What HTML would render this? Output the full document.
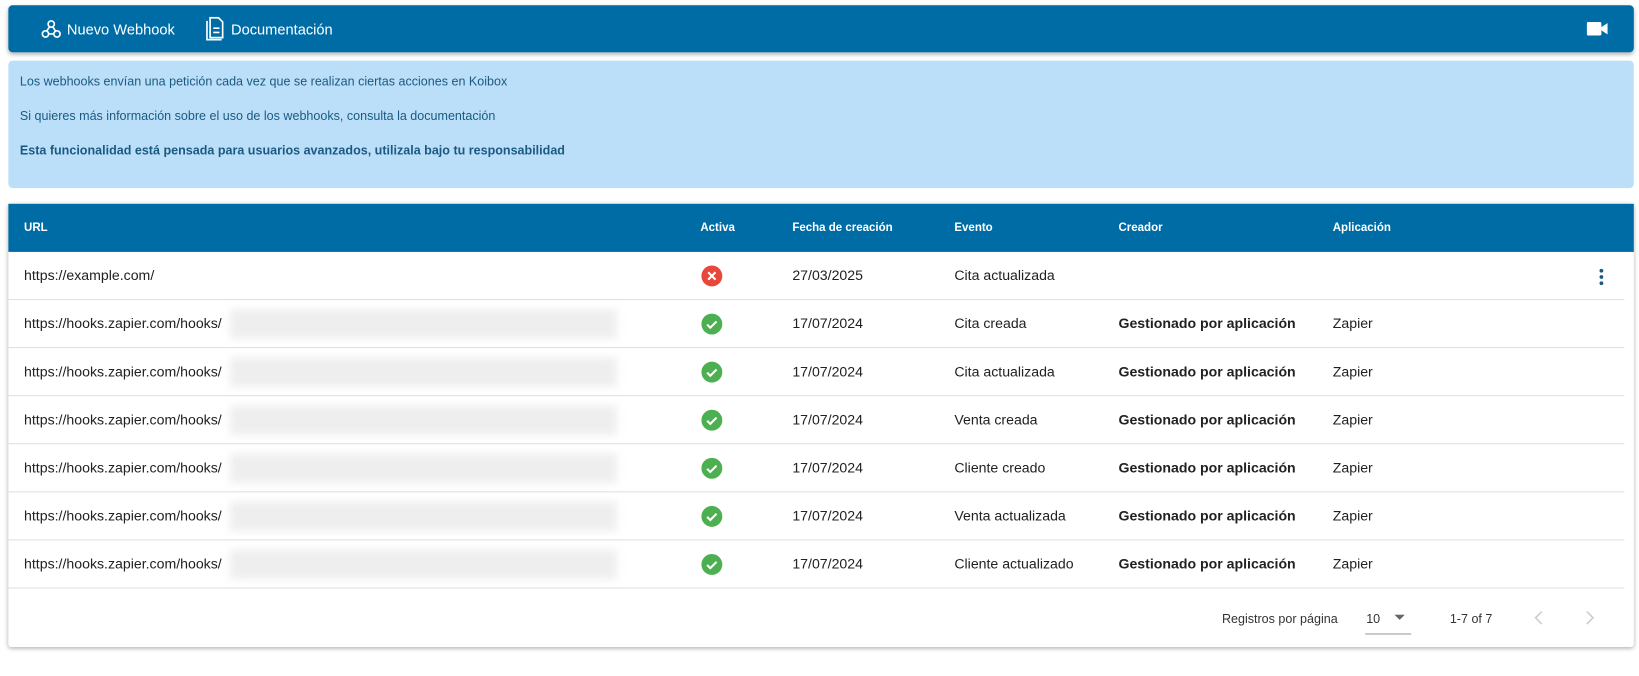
<!DOCTYPE html>
<html><head><meta charset="utf-8"><style>
*{box-sizing:border-box;margin:0;padding:0}
html,body{width:1639px;height:676px;overflow:hidden;background:#fff}
#w{width:1568px;height:647px;position:relative;transform:scale(1.0453);transform-origin:0 0;font-family:"Liberation Sans",sans-serif;color:#212121}
.tb{position:absolute;left:8px;top:5px;width:1555px;height:45px;background:#006ca6;border-radius:4px;box-shadow:0 2px 4px rgba(0,0,0,.3);color:#fff;font-size:14px}
.tb span{position:absolute;top:15px}
.info{position:absolute;left:8px;top:58px;width:1555px;height:122px;background:#bcdff9;border-radius:4px;color:#1a5a82;font-size:12px}
.info div{position:absolute;left:11px}
.card{position:absolute;left:8px;top:195px;width:1555px;height:424px;background:#fff;box-shadow:0 1px 4px rgba(0,0,0,.3);border-radius:3px}
.hd{position:absolute;left:0;top:0;width:100%;height:46px;background:#006ca6;color:#fff;font-size:11px;font-weight:bold}
.hd span{position:absolute;top:17px}
.row{position:absolute;left:0;width:1546px;height:46px;border-bottom:1px solid #e0e0e0;font-size:13.5px}
.row span{position:absolute;top:15px}
.c1{left:15px}.c2{left:662px}.c3{left:750px}.c4{left:905px}.c5{left:1062px;font-weight:bold}.c6{left:1267px}
.blur{position:absolute;left:212px;top:9px;width:370px;height:28px;background:#eee;filter:blur(4px)}
.ic{position:absolute;left:663px;top:13px;width:20px;height:20px;border-radius:50%;background:#4caf50}
.ft{position:absolute;top:390px;font-size:12px;color:#333}
</style></head><body><div id="w">
<div class="tb">
<svg style="position:absolute;left:31px;top:13px" width="20" height="20" viewBox="0 0 20 20" fill="none" stroke="#fff" stroke-width="1.6"><circle cx="10" cy="5" r="3"/><circle cx="4.5" cy="14.5" r="3"/><circle cx="15.5" cy="14.5" r="3"/><path d="M8.5 7.5L5.5 12M11.5 7.5l3 5M7.5 14.5h5"/></svg>
<span style="left:56px">Nuevo Webhook</span>
<svg style="position:absolute;left:188px;top:11px" width="20" height="24" viewBox="0 0 20 24" fill="none" stroke="#fff" stroke-width="1.6"><path d="M2 4v18h14"/><path d="M5 1h8l4 4v15H5z"/><path d="M8 11h6M8 15h6"/></svg>
<span style="left:213px">Documentación</span>
<svg style="position:absolute;left:1510px;top:16px" width="20" height="13" viewBox="0 0 20 13"><rect x="0" y="0" width="14" height="13" rx="1.5" fill="#fff"/><path d="M14 5l6-4v11l-6-4z" fill="#fff"/></svg>
</div>
<div class="info">
<div style="top:13px">Los webhooks envían una petición cada vez que se realizan ciertas acciones en Koibox</div>
<div style="top:46px">Si quieres más información sobre el uso de los webhooks, consulta la documentación</div>
<div style="top:79px;font-weight:bold">Esta funcionalidad está pensada para usuarios avanzados, utilizala bajo tu responsabilidad</div>
</div>
<div class="card">
<div class="hd"><span style="left:15px">URL</span><span style="left:662px">Activa</span><span style="left:750px">Fecha de creación</span><span style="left:905px">Evento</span><span style="left:1062px">Creador</span><span style="left:1267px">Aplicación</span></div>
<div class="row" style="top:46px"><span class="c1">https://example.com/</span><div class="ic" style="background:#e8473a"><svg width="20" height="20"><path d="M6.5 6.5l7 7M13.5 6.5l-7 7" stroke="#fff" stroke-width="2"/></svg></div><span class="c3">27/03/2025</span><span class="c4">Cita actualizada</span><svg style="position:absolute;left:1521px;top:15px" width="6" height="18"><circle cx="3" cy="3" r="1.8" fill="#1a5a82"/><circle cx="3" cy="9" r="1.8" fill="#1a5a82"/><circle cx="3" cy="15" r="1.8" fill="#1a5a82"/></svg></div>
<div class="row" style="top:92px"><span class="c1">https://hooks.zapier.com/hooks/</span><div class="blur"></div><div class="ic"><svg width="20" height="20"><path d="M5.5 10.5l3 3 6-6" stroke="#fff" stroke-width="2" fill="none"/></svg></div><span class="c3">17/07/2024</span><span class="c4">Cita creada</span><span class="c5">Gestionado por aplicación</span><span class="c6">Zapier</span></div>
<div class="row" style="top:138px"><span class="c1">https://hooks.zapier.com/hooks/</span><div class="blur"></div><div class="ic"><svg width="20" height="20"><path d="M5.5 10.5l3 3 6-6" stroke="#fff" stroke-width="2" fill="none"/></svg></div><span class="c3">17/07/2024</span><span class="c4">Cita actualizada</span><span class="c5">Gestionado por aplicación</span><span class="c6">Zapier</span></div>
<div class="row" style="top:184px"><span class="c1">https://hooks.zapier.com/hooks/</span><div class="blur"></div><div class="ic"><svg width="20" height="20"><path d="M5.5 10.5l3 3 6-6" stroke="#fff" stroke-width="2" fill="none"/></svg></div><span class="c3">17/07/2024</span><span class="c4">Venta creada</span><span class="c5">Gestionado por aplicación</span><span class="c6">Zapier</span></div>
<div class="row" style="top:230px"><span class="c1">https://hooks.zapier.com/hooks/</span><div class="blur"></div><div class="ic"><svg width="20" height="20"><path d="M5.5 10.5l3 3 6-6" stroke="#fff" stroke-width="2" fill="none"/></svg></div><span class="c3">17/07/2024</span><span class="c4">Cliente creado</span><span class="c5">Gestionado por aplicación</span><span class="c6">Zapier</span></div>
<div class="row" style="top:276px"><span class="c1">https://hooks.zapier.com/hooks/</span><div class="blur"></div><div class="ic"><svg width="20" height="20"><path d="M5.5 10.5l3 3 6-6" stroke="#fff" stroke-width="2" fill="none"/></svg></div><span class="c3">17/07/2024</span><span class="c4">Venta actualizada</span><span class="c5">Gestionado por aplicación</span><span class="c6">Zapier</span></div>
<div class="row" style="top:322px"><span class="c1">https://hooks.zapier.com/hooks/</span><div class="blur"></div><div class="ic"><svg width="20" height="20"><path d="M5.5 10.5l3 3 6-6" stroke="#fff" stroke-width="2" fill="none"/></svg></div><span class="c3">17/07/2024</span><span class="c4">Cliente actualizado</span><span class="c5">Gestionado por aplicación</span><span class="c6">Zapier</span></div>
<span class="ft" style="left:1161px">Registros por página</span>
<span class="ft" style="left:1299px">10</span>
<svg style="position:absolute;left:1326px;top:393px" width="10" height="6"><path d="M0 0h10L5 5z" fill="#666"/></svg>
<div style="position:absolute;left:1298px;top:411px;width:44px;height:1px;background:#999"></div>
<span class="ft" style="left:1379px">1-7 of 7</span>
<svg style="position:absolute;left:1460px;top:389px" width="8" height="14"><path d="M7 1L1 7l6 6" stroke="#ccc" stroke-width="1.5" fill="none"/></svg>
<svg style="position:absolute;left:1509px;top:389px" width="8" height="14"><path d="M1 1l6 6-6 6" stroke="#ccc" stroke-width="1.5" fill="none"/></svg>
</div>
</div></body></html>
